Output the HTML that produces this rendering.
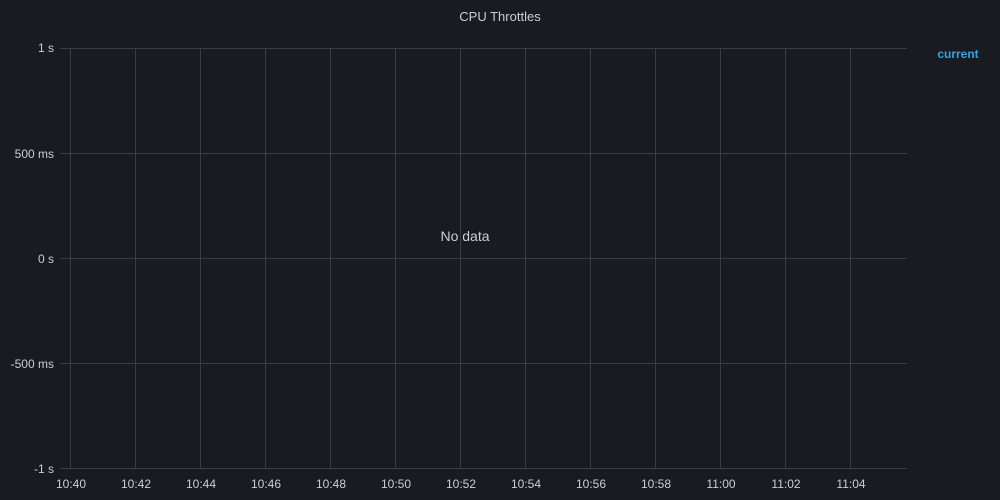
<!DOCTYPE html>
<html><head><style>
html,body{margin:0;padding:0;background:#181b1f;width:1000px;height:500px;overflow:hidden}
svg{display:block}
text{font-family:"Liberation Sans",sans-serif}
</style></head><body>
<svg width="1000" height="500" xmlns="http://www.w3.org/2000/svg">
<rect width="1000" height="500" fill="#181b1f"/>
<text x="500" y="21" text-anchor="middle" font-size="13" fill="#ccccdc" font-weight="500">CPU Throttles</text>
<g stroke="#3a3c41" stroke-width="1">
<line x1="60" y1="48.5" x2="907" y2="48.5"/>
<line x1="60" y1="153.5" x2="907" y2="153.5"/>
<line x1="60" y1="258.5" x2="907" y2="258.5"/>
<line x1="60" y1="363.5" x2="907" y2="363.5"/>
<line x1="60" y1="468.5" x2="907" y2="468.5"/>
<line x1="70.5" y1="48" x2="70.5" y2="469"/>
<line x1="135.5" y1="48" x2="135.5" y2="469"/>
<line x1="200.5" y1="48" x2="200.5" y2="469"/>
<line x1="265.5" y1="48" x2="265.5" y2="469"/>
<line x1="330.5" y1="48" x2="330.5" y2="469"/>
<line x1="395.5" y1="48" x2="395.5" y2="469"/>
<line x1="460.5" y1="48" x2="460.5" y2="469"/>
<line x1="525.5" y1="48" x2="525.5" y2="469"/>
<line x1="590.5" y1="48" x2="590.5" y2="469"/>
<line x1="655.5" y1="48" x2="655.5" y2="469"/>
<line x1="720.5" y1="48" x2="720.5" y2="469"/>
<line x1="785.5" y1="48" x2="785.5" y2="469"/>
<line x1="850.5" y1="48" x2="850.5" y2="469"/>
</g>
<g font-size="12" fill="#ccccdc" text-anchor="end">
<text x="54" y="52">1 s</text>
<text x="54" y="158">500 ms</text>
<text x="54" y="263">0 s</text>
<text x="54" y="368">-500 ms</text>
<text x="54" y="473">-1 s</text>
</g>
<g font-size="12" fill="#ccccdc" text-anchor="middle">
<text x="71" y="488">10:40</text>
<text x="136" y="488">10:42</text>
<text x="201" y="488">10:44</text>
<text x="266" y="488">10:46</text>
<text x="331" y="488">10:48</text>
<text x="396" y="488">10:50</text>
<text x="461" y="488">10:52</text>
<text x="526" y="488">10:54</text>
<text x="591" y="488">10:56</text>
<text x="656" y="488">10:58</text>
<text x="721" y="488">11:00</text>
<text x="786" y="488">11:02</text>
<text x="851" y="488">11:04</text>
</g>
<text x="465" y="241" text-anchor="middle" font-size="14" fill="#ccccdc">No data</text>
<text x="958" y="58" text-anchor="middle" font-size="12" font-weight="bold" fill="#3d9fe0">current</text>
</svg>
</body></html>
